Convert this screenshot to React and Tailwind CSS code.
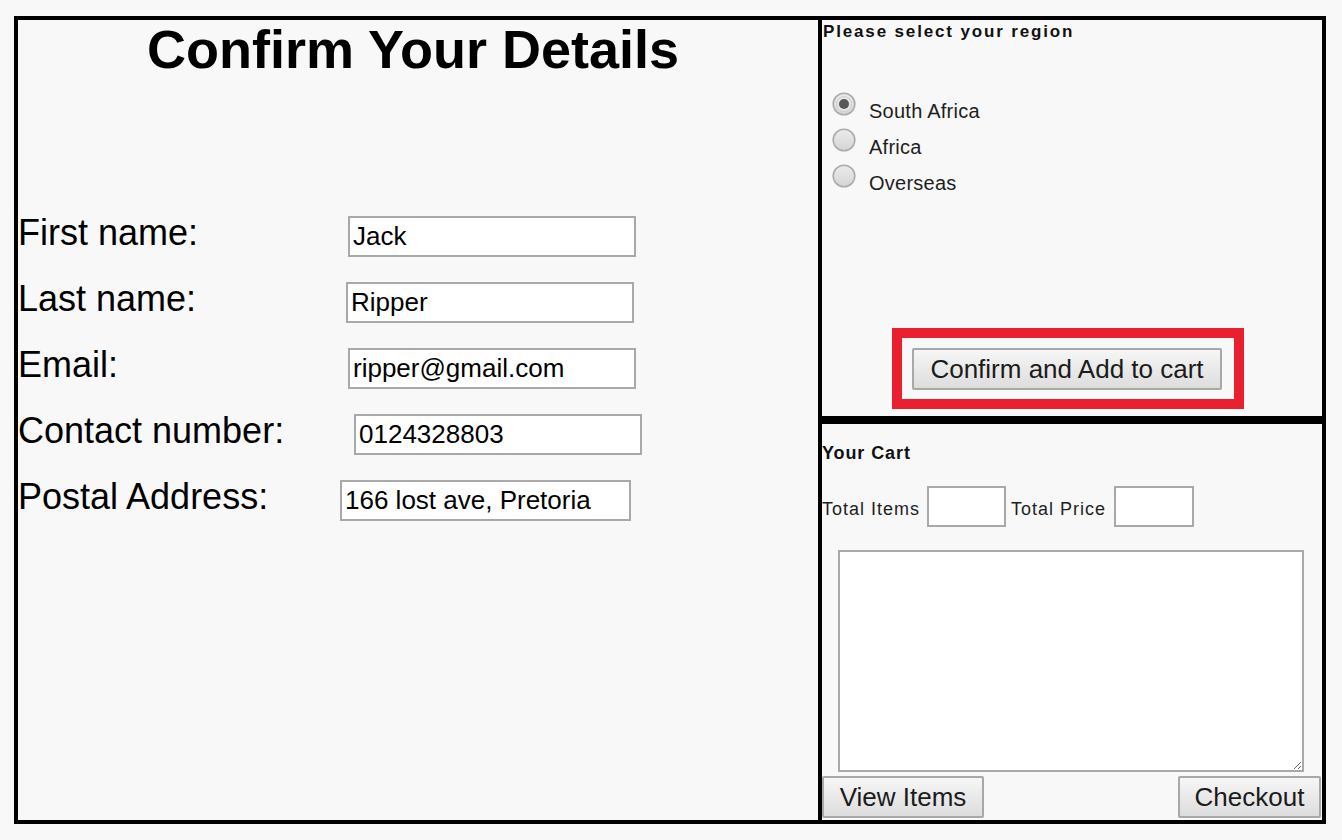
import React from "react";

function Radio({ checked }) {
  return (
    <svg width="24" height="24" viewBox="0 0 24 24" className="shrink-0">
      <defs>
        <linearGradient id={checked ? "rgc" : "rgu"} x1="0" y1="0" x2="0" y2="1">
          <stop offset="0" stopColor="#ececec" />
          <stop offset="1" stopColor="#d4d4d4" />
        </linearGradient>
      </defs>
      <circle cx="12" cy="12" r="10.8" fill={`url(#${checked ? "rgc" : "rgu"})`} stroke="#acacac" strokeWidth="1.6" />
      {checked && <circle cx="12" cy="12" r="7.5" fill="#e6e6e6" stroke="#cfcfcf" strokeWidth="1" />}
      {checked && <circle cx="12" cy="12" r="5" fill="#575757" />}
    </svg>
  );
}

const btn =
  "h-[42px] border-2 border-[#a8a8a8] rounded-[2px] bg-linear-to-b from-[#f6f6f6] to-[#dddddd] text-[26px] text-[#1b1b1b] leading-none flex items-center justify-center";

const inputCls =
  "h-[41px] border-2 border-[#a9a9a9] bg-white text-[26px] text-black pl-[3px] outline-none shrink-0";

function Row({ label, labelW, value, inputW = "w-[288px]" }) {
  return (
    <div className="flex items-start">
      <span className={`${labelW} shrink-0 whitespace-nowrap text-[36px] leading-[33px] text-black`}>{label}</span>
      <input className={`${inputCls} ${inputW}`} defaultValue={value} readOnly />
    </div>
  );
}

export default function App() {
  return (
    <div
      className="w-[1342px] h-[840px] bg-[#f8f8f8] overflow-hidden pt-[16px] pl-[14px]"
      style={{ fontFamily: "'Liberation Sans', Arial, sans-serif" }}
    >
      <div className="flex h-[808px]">
        {/* Left panel */}
        <div className="w-[808px] h-[808px] border-4 border-black flex flex-col">
          <h1 className="text-[54px] font-bold leading-[53px] text-center mt-[3px] pr-[10px] text-black">Confirm Your Details</h1>
          <div className="flex flex-col gap-[25px] mt-[140px]">
            <Row label="First name:" labelW="w-[330px]" value="Jack" />
            <Row label="Last name:" labelW="w-[328px]" value="Ripper" />
            <Row label="Email:" labelW="w-[330px]" value="ripper@gmail.com" />
            <Row label="Contact number:" labelW="w-[336px]" value="0124328803" />
            <Row label="Postal Address:" labelW="w-[322px]" value="166 lost ave, Pretoria" inputW="w-[291px]" />
          </div>
        </div>

        {/* Right column */}
        <div className="w-[504px] h-[808px] border-t-4 border-r-4 border-b-4 border-black flex flex-col">
          {/* Region panel */}
          <div className="h-[400px] border-b-4 border-black flex flex-col">
            <div className="text-[17px] font-bold leading-[20px] tracking-[1.85px] mt-[2px] ml-[1px] text-[#111]">
              Please select your region
            </div>
            <div className="flex flex-col gap-[5px] mt-[50px] ml-[10px]">
              {[
                ["South Africa", true],
                ["Africa", false],
                ["Overseas", false],
              ].map(([t, c]) => (
                <div key={t} className="flex items-start">
                  <Radio checked={c} />
                  <span className="ml-[13px] mt-[7px] text-[20px] leading-[24px] tracking-[0.25px] text-[#1e1e1e]">{t}</span>
                </div>
              ))}
            </div>
            <div className="mt-auto mb-[7px] ml-[70px] w-[352px] h-[81px] border-[10px] border-[#e9202f] pt-[10px] pl-[10px]">
              <button className={`${btn} w-[310px]`}>Confirm and Add to cart</button>
            </div>
          </div>

          {/* Cart panel */}
          <div className="h-[400px] border-t-4 border-black flex flex-col">
            <div className="text-[18px] font-bold leading-[20px] tracking-[0.9px] mt-[19px] text-[#111]">Your Cart</div>
            <div className="flex items-start mt-[23px]">
              <span className="w-[105px] shrink-0 whitespace-nowrap mt-[12px] text-[18px] leading-[22px] tracking-[1px] text-[#1e1e1e]">
                Total Items
              </span>
              <input className="w-[79px] h-[41px] border-2 border-[#a9a9a9] bg-white outline-none shrink-0" readOnly />
              <span className="w-[103px] shrink-0 whitespace-nowrap ml-[5px] mt-[12px] text-[18px] leading-[22px] tracking-[1px] text-[#1e1e1e]">
                Total Price
              </span>
              <input className="w-[80px] h-[41px] border-2 border-[#a9a9a9] bg-white outline-none shrink-0" readOnly />
            </div>
            <textarea className="ml-[16px] mt-[23px] w-[466px] h-[222px] border-2 border-[#a9a9a9] bg-white outline-none shrink-0" readOnly />
            <div className="flex justify-between mt-[4px] pr-[1px]">
              <button className={`${btn} w-[162px]`}>View Items</button>
              <button className={`${btn} w-[143px]`}>Checkout</button>
            </div>
          </div>
        </div>
      </div>
    </div>
  );
}
